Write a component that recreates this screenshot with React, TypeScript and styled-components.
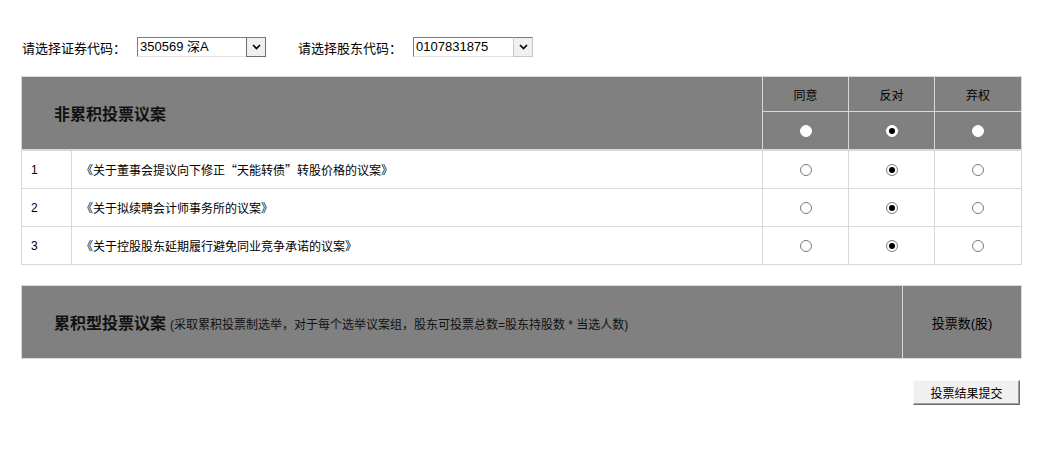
import React from "react";
import styled, { createGlobalStyle } from "styled-components";

const GlobalStyle = createGlobalStyle`
  html, body { margin: 0; padding: 0; background: #fff; }
  body { font-family: "Liberation Sans", "Noto Sans CJK SC", Arial, sans-serif; color: #000; }
`;

const Page = styled.div`
  padding: 37px 25px 40px 21px;
  width: 1000px;
`;

const Toolbar = styled.div`
  display: flex;
  align-items: center;
  height: 20px;
  margin-bottom: 19px;
`;

const Label = styled.span<{ $gap?: number }>`
  font-size: 13px;
  margin-left: ${(p) => p.$gap ?? 0}px;
  padding-left: 1px;
  margin-right: 11px;
  white-space: nowrap;
`;

const Select = styled.div<{ $w: number }>`
  display: flex;
  width: ${(p) => p.$w}px;
  height: 20px;
  box-sizing: border-box;
`;

const SelectValue = styled.div`
  flex: 1;
  box-sizing: border-box;
  height: 20px;
  border-top: 1px solid #7a7a7a;
  border-left: 1px solid #7a7a7a;
  border-bottom: 1px solid #e3e3e3;
  border-right: 0;
  font-size: 13px;
  line-height: 17px;
  padding-left: 2px;
  white-space: nowrap;
  overflow: hidden;
`;

const SelectButton = styled.div<{ $boxed?: boolean }>`
  width: 20px;
  height: 20px;
  box-sizing: border-box;
  display: flex;
  align-items: center;
  justify-content: center;
  background: #f0f0f0;
  border: 1px solid ${(p) => (p.$boxed ? "#6d6d6d" : "#c8c8c8")};
  border-top-color: #7a7a7a;
`;

const Chevron = () => (
  <svg width="9" height="6" viewBox="0 0 9 6">
    <path d="M1 1 L4.5 4.5 L8 1" fill="none" stroke="#000" strokeWidth="1.6" />
  </svg>
);

const Table = styled.table`
  width: 1000px;
  border-collapse: collapse;
  table-layout: fixed;
  border: 1px solid #d9d9d9;
`;

const HeadCell = styled.th<{ $h?: number; $thick?: boolean }>`
  background: #808080;
  border: 1px solid #d9d9d9;
  border-bottom: ${(p) => (p.$thick ? "2px" : "1px")} solid #d9d9d9;
  height: ${(p) => p.$h ?? 34}px;
  padding: 0;
  font-weight: normal;
  font-size: 12px;
  text-align: center;
  vertical-align: middle;
`;

const TitleCell = styled(HeadCell)`
  text-align: left;
  padding-left: 32px;
`;

const Title = styled.span`
  font-size: 16px;
  font-weight: bold;
  color: #111;
`;

const Note = styled.span`
  font-size: 12px;
  color: #111;
  margin-left: 4px;
`;

const VoteUnit = styled.span`
  font-size: 13px;
`;

const Cell = styled.td<{ $center?: boolean; $cjk?: boolean }>`
  border: 1px solid #d9d9d9;
  height: 37px;
  padding: 0 0 0 ${(p) => (p.$center ? 0 : 9)}px;
  font-size: 12px;
  font-family: ${(p) =>
    p.$cjk ? `"Noto Sans CJK SC", sans-serif` : `"Liberation Sans", "Noto Sans CJK SC", sans-serif`};
  text-align: ${(p) => (p.$center ? "center" : "left")};
  vertical-align: middle;
`;

const Radio = styled.span<{ $checked?: boolean; $head?: boolean }>`
  display: inline-block;
  vertical-align: middle;
  width: 12px;
  height: 12px;
  box-sizing: border-box;
  border-radius: 50%;
  background: #fff;
  border: 1px solid ${(p) => (p.$head ? "#fff" : "#7a7a7a")};
  position: relative;
  &::after {
    content: "";
    display: ${(p) => (p.$checked ? "block" : "none")};
    position: absolute;
    left: 2px;
    top: 2px;
    width: 6px;
    height: 6px;
    border-radius: 50%;
    background: #000;
  }
`;

const Spacer = styled.div<{ $h: number }>`
  height: ${(p) => p.$h}px;
`;

const Actions = styled.div`
  display: flex;
  justify-content: flex-end;
  padding-right: 1px;
`;

const SubmitButton = styled.button`
  width: 107px;
  height: 25px;
  font-family: "Liberation Sans", "Noto Sans CJK SC", sans-serif;
  font-size: 12px;
  background: #f0f0f0;
  border: 1px solid;
  border-color: #f8f8f8 #6d6d6d #6d6d6d #f8f8f8;
  box-shadow: inset -1px -1px 0 #a0a0a0;
  padding: 0;
  color: #000;
`;

const rows = [
  { n: 1, text: "《关于董事会提议向下修正“天能转债”转股价格的议案》" },
  { n: 2, text: "《关于拟续聘会计师事务所的议案》" },
  { n: 3, text: "《关于控股股东延期履行避免同业竞争承诺的议案》" },
];

export default function App() {
  return (
    <>
      <GlobalStyle />
      <Page>
        <Toolbar>
          <Label>请选择证券代码：</Label>
          <Select $w={129}>
            <SelectValue>350569 深A</SelectValue>
            <SelectButton $boxed>
              <Chevron />
            </SelectButton>
          </Select>
          <Label $gap={31}>请选择股东代码：</Label>
          <Select $w={120}>
            <SelectValue>0107831875</SelectValue>
            <SelectButton>
              <Chevron />
            </SelectButton>
          </Select>
        </Toolbar>

        <Table>
          <colgroup>
            <col style={{ width: 50 }} />
            <col style={{ width: 691 }} />
            <col style={{ width: 86 }} />
            <col style={{ width: 86 }} />
            <col style={{ width: 87 }} />
          </colgroup>
          <thead>
            <tr>
              <TitleCell colSpan={2} rowSpan={2} $thick>
                <Title>非累积投票议案</Title>
              </TitleCell>
              <HeadCell $h={34}>同意</HeadCell>
              <HeadCell $h={34}>反对</HeadCell>
              <HeadCell $h={34}>弃权</HeadCell>
            </tr>
            <tr>
              <HeadCell $h={37} $thick>
                <Radio $head />
              </HeadCell>
              <HeadCell $h={37} $thick>
                <Radio $head $checked />
              </HeadCell>
              <HeadCell $h={37} $thick>
                <Radio $head />
              </HeadCell>
            </tr>
          </thead>
          <tbody>
            {rows.map((r) => (
              <tr key={r.n}>
                <Cell>{r.n}</Cell>
                <Cell $cjk>{r.text}</Cell>
                <Cell $center>
                  <Radio />
                </Cell>
                <Cell $center>
                  <Radio $checked />
                </Cell>
                <Cell $center>
                  <Radio />
                </Cell>
              </tr>
            ))}
          </tbody>
        </Table>

        <Spacer $h={20} />

        <Table>
          <colgroup>
            <col style={{ width: 881 }} />
            <col style={{ width: 119 }} />
          </colgroup>
          <thead>
            <tr>
              <TitleCell $h={72}>
                <Title>累积型投票议案</Title>
                <Note>(采取累积投票制选举，对于每个选举议案组，股东可投票总数=股东持股数 * 当选人数)</Note>
              </TitleCell>
              <HeadCell $h={72}>
                <VoteUnit>投票数(股)</VoteUnit>
              </HeadCell>
            </tr>
          </thead>
        </Table>

        <Spacer $h={21} />

        <Actions>
          <SubmitButton>投票结果提交</SubmitButton>
        </Actions>
      </Page>
    </>
  );
}
